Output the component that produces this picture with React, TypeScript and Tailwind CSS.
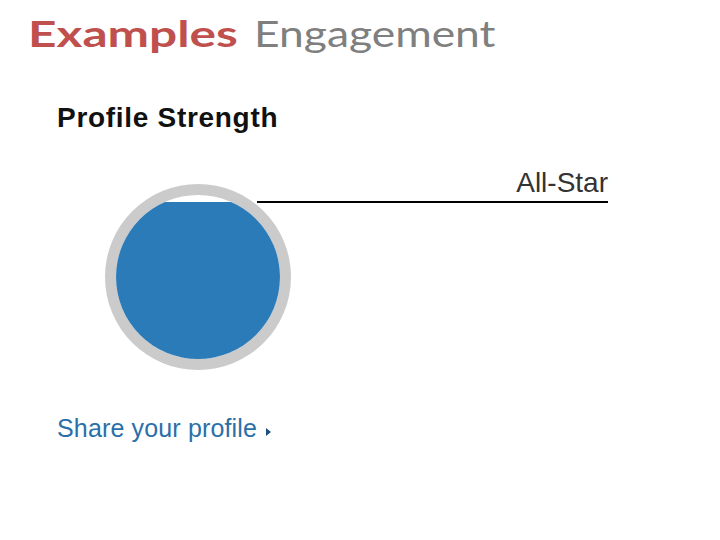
export default function App() {
  return (
    <div className="w-[720px] h-[540px] bg-white overflow-hidden">
      {/* Slide title (the source slide is stretched wide) */}
      <h1 className="pl-[28px] pt-[14px] text-[37px] leading-none font-['Lato',sans-serif] whitespace-nowrap">
        <span className="inline-block origin-left scale-x-[1.34] font-bold text-[#c0504d]">Examples</span>
        <span className="inline-block origin-left scale-x-[1.2] ml-[69px] text-[#7f7f7f]">Engagement</span>
      </h1>

      <div className="pl-[57px] mt-[53px] font-['Liberation_Sans',Arial,sans-serif]">
        <h2 className="text-[28px] leading-none font-bold tracking-[0.7px] text-[#111]">Profile Strength</h2>

        <div className="flex items-start mt-[37px]">
          {/* Strength gauge */}
          <div className="relative z-10 ml-[48px] mt-[15px] w-[186px] h-[186px] rounded-full bg-[#cbcbcb] p-[11px] shrink-0">
            <div className="w-full h-full rounded-full bg-white overflow-hidden">
              <div className="mt-[7px] h-full bg-[#2b7bb9]"></div>
            </div>
          </div>

          <div className="-ml-[34px] w-[351px] border-b-2 border-black pb-[4px] text-right text-[28px] leading-none text-[#333]">
            All-Star
          </div>
        </div>

        <a className="mt-[46px] flex items-start text-[25px] leading-none text-[#2a6fa8]">
          <span className="tracking-[0.15px]">Share your profile</span>
          <svg width="5" height="8" viewBox="0 0 5 8" className="ml-[9px] mt-[12px]">
            <path d="M0 0 L5 4 L0 8 Z" fill="#1d4f7a" />
          </svg>
        </a>
      </div>
    </div>
  );
}
